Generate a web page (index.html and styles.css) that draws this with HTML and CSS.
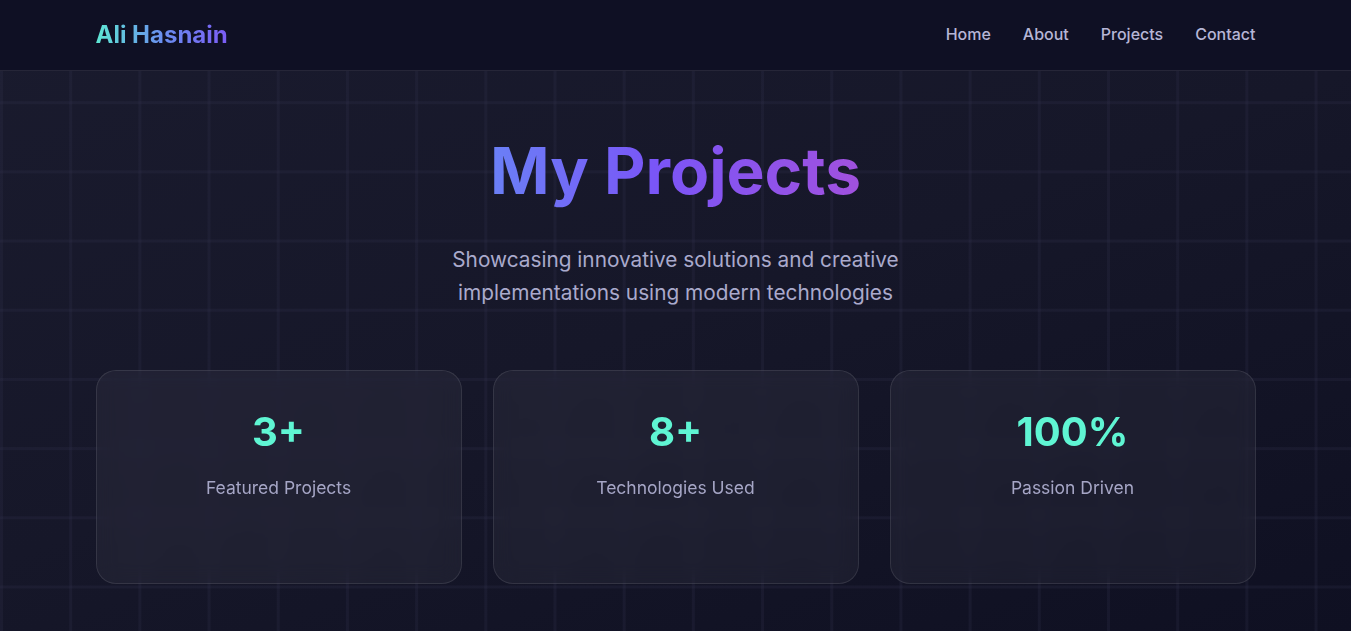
FILE: index.html
```html
<!DOCTYPE html>
<html lang="en">
<head>
<meta charset="utf-8">
<title>Ali Hasnain - Projects</title>
<link rel="stylesheet" href="styles.css">
</head>
<body>
<div class="page">
  <header class="nav">
    <div class="container nav-inner">
      <a class="logo" href="#">Ali Hasnain</a>
      <nav class="links">
        <a href="#">Home</a>
        <a href="#">About</a>
        <a href="#">Projects</a>
        <a href="#">Contact</a>
      </nav>
    </div>
  </header>
  <main class="hero">
    <div class="container">
      <h1 class="title">My Projects</h1>
      <p class="subtitle">Showcasing innovative solutions and creative implementations using modern technologies</p>
      <div class="stats">
        <div class="card"><div class="num">3+</div><div class="label">Featured Projects</div></div>
        <div class="card"><div class="num">8+</div><div class="label">Technologies Used</div></div>
        <div class="card"><div class="num">100%</div><div class="label">Passion Driven</div></div>
      </div>
    </div>
  </main>
</div>
</body>
</html>
```
FILE: styles.css
```css
* { box-sizing: border-box; }
html, body { margin: 0; padding: 0; }
body {
  font-family: Inter, "Noto Sans", sans-serif;
  background: #11121f;
  color: #fff;
  height: 631px;
  overflow: hidden;
}
.page {
  height: 631px;
  background:
    linear-gradient(rgba(50, 50, 78, 0.24) 3px, transparent 3px) 0 32px / 69.2px 69.2px,
    linear-gradient(90deg, rgba(50, 50, 78, 0.24) 3px, transparent 3px) 0 0 / 69.2px 69.2px,
    linear-gradient(160deg, #1a1b2e 0%, #161729 50%, #0f1022 100%);
}
.container {
  max-width: 1200px;
  margin: 0 auto;
  padding: 0 20px;
}
.nav {
  height: 71px;
  background: #0f1024;
  border-bottom: 1px solid #262638;
}
.nav-inner {
  height: 70px;
  padding-bottom: 2px;
  display: flex;
  align-items: center;
  justify-content: space-between;
}
.logo {
  font-size: 24px;
  font-weight: 700;
  text-decoration: none;
  background: linear-gradient(90deg, #5ee8d4 0%, #6a8ff0 50%, #7b5cf5 100%);
  -webkit-background-clip: text;
  background-clip: text;
  color: transparent;
}
.links {
  display: flex;
  gap: 32px;
}
.links a {
  color: #b6b6d6;
  font-size: 16px;
  font-weight: 500;
  text-decoration: none;
}
.hero { padding-top: 62px; text-align: center; }
.title {
  margin: 0 auto;
  font-size: 64px;
  line-height: 1.2;
  font-weight: 700;
  display: inline-block;
  background: linear-gradient(90deg, #6a80f6 0%, #7a55f7 45%, #a151de 100%);
  -webkit-background-clip: text;
  background-clip: text;
  color: transparent;
}
.subtitle {
  margin: 33px auto 0;
  max-width: 500px;
  font-size: 20.8px;
  line-height: 1.6;
  color: #aaaacc;
}
.stats {
  margin-top: 61px;
  display: grid;
  grid-template-columns: repeat(3, 1fr);
  gap: 31px;
}
.card {
  height: 214px;
  padding: 37px 20px;
  border-radius: 20px;
  background: rgba(255, 255, 255, 0.045);
  border: 1px solid rgba(255, 255, 255, 0.1);
  backdrop-filter: blur(10px);
  -webkit-backdrop-filter: blur(10px);
}
.num {
  font-size: 40px;
  font-weight: 700;
  line-height: 1.2;
  color: #5ff5d3;
}
.label {
  margin-top: 21px;
  font-size: 17.5px;
  color: #a6a6c6;
}
```
